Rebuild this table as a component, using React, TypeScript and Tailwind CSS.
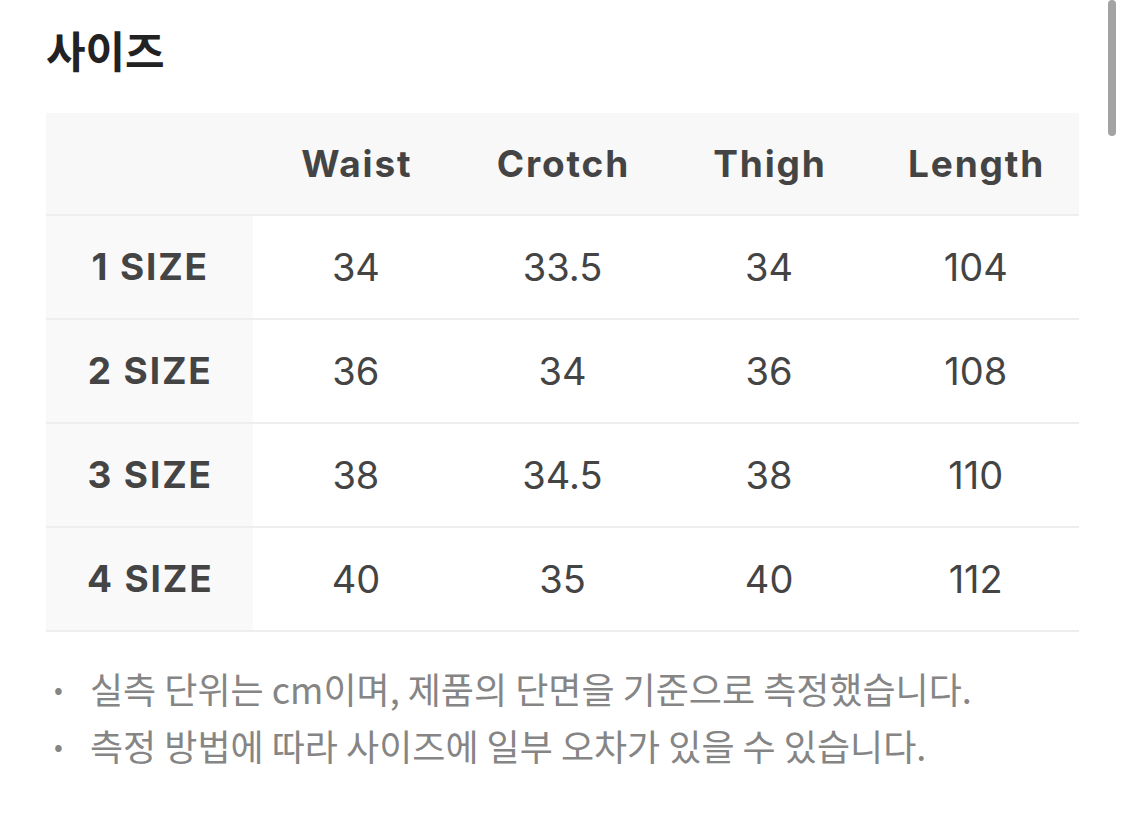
import React from 'react'

const COLUMNS = ['Waist', 'Crotch', 'Thigh', 'Length']

const ROWS = [
  { label: '1 SIZE', values: ['34', '33.5', '34', '104'] },
  { label: '2 SIZE', values: ['36', '34', '36', '108'] },
  { label: '3 SIZE', values: ['38', '34.5', '38', '110'] },
  { label: '4 SIZE', values: ['40', '35', '40', '112'] },
]

const NOTES = [
  '실측 단위는 cm이며, 제품의 단면을 기준으로 측정했습니다.',
  '측정 방법에 따라 사이즈에 일부 오차가 있을 수 있습니다.',
]

const FONT = "font-['Inter','Noto_Sans_CJK_KR',sans-serif]"

export default function App() {
  return (
    <div className={`relative min-h-[821px] w-[1125px] bg-white ${FONT}`}>
      <div className="pl-[46px] pt-[21px] w-[1079px]">
        <h2 className="text-[43px] leading-[56px] font-bold text-[#222] font-['Noto_Sans_CJK_KR',sans-serif]">
          사이즈
        </h2>

        {/* Size table */}
        <div className="mt-[36px]">
          <div className="grid grid-cols-5 h-[103px] bg-[#f8f8f8] border-b-2 border-[#eeeeee]">
            <div />
            {COLUMNS.map((col) => (
              <div
                key={col}
                className="flex items-center justify-center pl-[0.05em] text-[37px] tracking-[0.05em] font-bold text-[#444]"
              >
                {col}
              </div>
            ))}
          </div>
          {ROWS.map((row) => (
            <div
              key={row.label}
              className="grid grid-cols-5 h-[104px] border-b-2 border-[#eeeeee]"
            >
              <div className="flex items-center justify-center pl-[0.05em] bg-[#f9f9f9] text-[37px] tracking-[0.05em] font-bold text-[#444]">
                {row.label}
              </div>
              {row.values.map((v, i) => (
                <div
                  key={i}
                  className="flex items-center justify-center text-[38px] font-normal text-[#444]"
                >
                  {v}
                </div>
              ))}
            </div>
          ))}
        </div>

        {/* Notes */}
        <ul className="mt-[27px] flex flex-col">
          {NOTES.map((note) => (
            <li
              key={note}
              className="flex items-center h-[57px] text-[36px] text-[#858585] font-['Noto_Sans_CJK_KR',sans-serif]"
            >
              <span className="w-[44px] pl-[8px] text-[26px]">•</span>
              <span>{note}</span>
            </li>
          ))}
        </ul>
      </div>

      {/* Scrollbar */}
      <div className="absolute right-[9px] top-0 w-[8px] h-[136px] rounded-full bg-[#a3a3a3]" />
    </div>
  )
}
